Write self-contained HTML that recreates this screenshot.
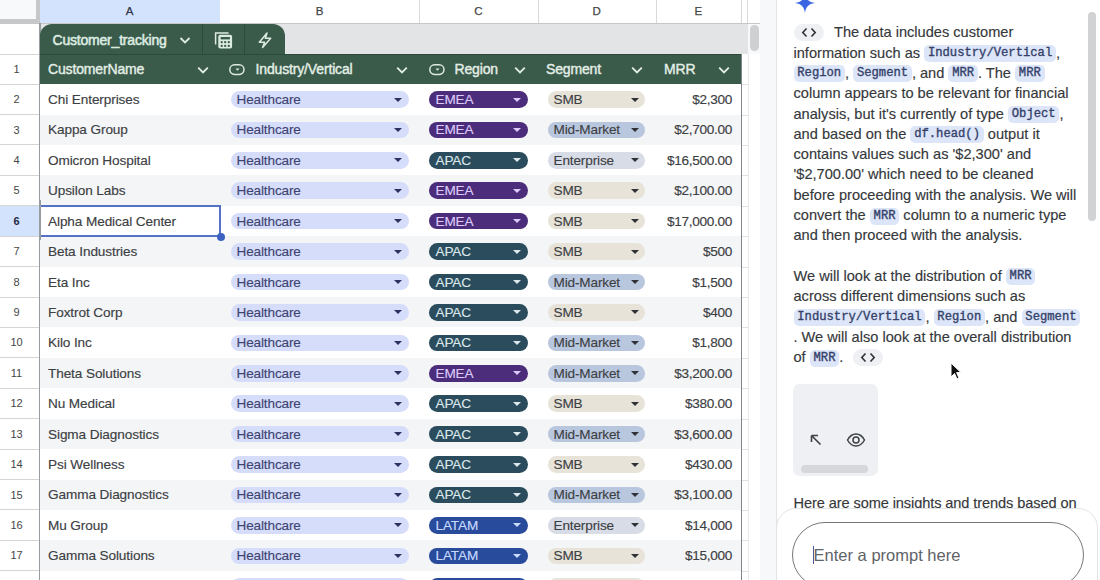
<!DOCTYPE html><html><head><meta charset="utf-8"><style>
*{margin:0;padding:0;box-sizing:border-box}
html,body{width:1100px;height:580px;overflow:hidden;background:#fff;font-family:"Liberation Sans",sans-serif;position:relative}
.a{position:absolute;white-space:nowrap}
.colhdr{left:0;top:0;width:760px;height:23.5px;background:#fff;border-bottom:1px solid #c7c7c7}
.corner{left:0;top:0;width:39.5px;height:23.3px;background:#f8f9fa;border-right:4px solid #c6c7c8;border-bottom:4.2px solid #c6c7c8}
.cl{top:0;height:23px;font-size:11.5px;color:#444746;text-align:center;line-height:23px;-webkit-text-stroke:0.25px #444746}
.vl{top:0;width:1px;height:23px;background:#d9d9d9}
.band{left:40px;top:23.5px;width:708px;height:30px;background:#e3e4e6}
.rowhdr{left:0;width:33px;font-size:11px;color:#444746;text-align:center}
.rl{left:0;width:39px;height:1px;background:#d5d5d5}
.tab{left:40px;top:24px;width:245px;height:30px;background:#3a5a4a;border-radius:12px 12px 0 0}
.hdr{left:40px;top:54px;width:701px;height:30.1px;background:#3a5a4a}
.ht{color:#e3efe6;font-size:14px;line-height:30px;-webkit-text-stroke:0.4px #e3efe6;letter-spacing:-0.15px}
.row{left:40px;width:701px}
.nm{left:48px;font-size:13.6px;color:#3c4043;letter-spacing:-0.1px;line-height:16px;-webkit-text-stroke:0.15px #3c4043}
.chip{border-radius:9px;height:16.6px}
.ct{font-size:13.6px;line-height:16.6px;letter-spacing:-0.15px;-webkit-text-stroke:0.12px currentColor}
.arr{width:0;height:0;border-left:4.5px solid transparent;border-right:4.5px solid transparent;border-top:4.8px solid #2b3160}
.mrr{left:600px;width:132px;font-size:13.6px;color:#3c4043;text-align:right;letter-spacing:-0.3px;line-height:16px;-webkit-text-stroke:0.15px #3c4043}
.pl{left:793.5px;font-size:14.6px;color:#35383b;-webkit-text-stroke:0.15px #35383b;line-height:20.3px;height:20.3px}
.cd{display:inline-block;font-family:"Liberation Mono",monospace;font-size:12.2px;color:#34416a;-webkit-text-stroke:0.35px #34416a;background:#dde5f8;border-radius:5px;padding:0 3.8px;line-height:17px;height:17px;vertical-align:1.5px}
</style></head><body>
<div class="a colhdr"></div>
<div class="a" style="left:39px;top:0;width:181px;height:23px;background:#d3e3fd"></div>
<div class="a corner"></div>
<div class="a vl" style="left:419px"></div>
<div class="a vl" style="left:537.6px"></div>
<div class="a vl" style="left:655.6px"></div>
<div class="a vl" style="left:741px"></div>
<div class="a vl" style="left:747px"></div>
<div class="a cl" style="left:39px;width:181px;color:#1f2a44">A</div>
<div class="a cl" style="left:220px;width:199px;">B</div>
<div class="a cl" style="left:419px;width:118.60000000000002px;">C</div>
<div class="a cl" style="left:537.6px;width:118.0px;">D</div>
<div class="a cl" style="left:655.6px;width:85.39999999999998px;">E</div>
<div class="a band"></div>
<div class="a" style="left:0;top:24px;width:39px;height:556px;background:#fff"></div>
<div class="a rl" style="top:53.5px"></div>
<div class="a rowhdr" style="top:54.00px;height:30.10px;line-height:30.10px;color:#444746">1</div>
<div class="a rl" style="top:83.60px"></div>
<div class="a rowhdr" style="top:84.10px;height:30.42px;line-height:30.42px;color:#444746">2</div>
<div class="a rl" style="top:114.02px"></div>
<div class="a rowhdr" style="top:114.52px;height:30.42px;line-height:30.42px;color:#444746">3</div>
<div class="a rl" style="top:144.44px"></div>
<div class="a rowhdr" style="top:144.94px;height:30.42px;line-height:30.42px;color:#444746">4</div>
<div class="a rl" style="top:174.86px"></div>
<div class="a rowhdr" style="top:175.36px;height:30.42px;line-height:30.42px;color:#444746">5</div>
<div class="a rl" style="top:205.28px"></div>
<div class="a" style="left:0;top:205.78px;width:39px;height:30.42px;background:#d3e3fd"></div>
<div class="a rowhdr" style="top:205.78px;height:30.42px;line-height:30.42px;color:#1f2a44;font-weight:bold">6</div>
<div class="a rl" style="top:235.70px"></div>
<div class="a rowhdr" style="top:236.20px;height:30.42px;line-height:30.42px;color:#444746">7</div>
<div class="a rl" style="top:266.12px"></div>
<div class="a rowhdr" style="top:266.62px;height:30.42px;line-height:30.42px;color:#444746">8</div>
<div class="a rl" style="top:296.54px"></div>
<div class="a rowhdr" style="top:297.04px;height:30.42px;line-height:30.42px;color:#444746">9</div>
<div class="a rl" style="top:326.96px"></div>
<div class="a rowhdr" style="top:327.46px;height:30.42px;line-height:30.42px;color:#444746">10</div>
<div class="a rl" style="top:357.38px"></div>
<div class="a rowhdr" style="top:357.88px;height:30.42px;line-height:30.42px;color:#444746">11</div>
<div class="a rl" style="top:387.80px"></div>
<div class="a rowhdr" style="top:388.30px;height:30.42px;line-height:30.42px;color:#444746">12</div>
<div class="a rl" style="top:418.22px"></div>
<div class="a rowhdr" style="top:418.72px;height:30.42px;line-height:30.42px;color:#444746">13</div>
<div class="a rl" style="top:448.64px"></div>
<div class="a rowhdr" style="top:449.14px;height:30.42px;line-height:30.42px;color:#444746">14</div>
<div class="a rl" style="top:479.06px"></div>
<div class="a rowhdr" style="top:479.56px;height:30.42px;line-height:30.42px;color:#444746">15</div>
<div class="a rl" style="top:509.48px"></div>
<div class="a rowhdr" style="top:509.98px;height:30.42px;line-height:30.42px;color:#444746">16</div>
<div class="a rl" style="top:539.90px"></div>
<div class="a rowhdr" style="top:540.40px;height:30.42px;line-height:30.42px;color:#444746">17</div>
<div class="a rl" style="top:570.32px"></div>
<div class="a rowhdr" style="top:570.82px;height:30.42px;line-height:30.42px;color:#444746">18</div>
<div class="a rl" style="top:600.74px"></div>
<div class="a" style="left:39px;top:23px;width:2px;height:557px;background:#979ca1"></div>
<div class="a tab"></div>
<div class="a" style="left:52.5px;top:24.5px;line-height:30px;font-size:14px;color:#dcebe0;-webkit-text-stroke:0.55px #dcebe0;letter-spacing:-0.2px">Customer_tracking</div>
<svg class="a" style="left:178px;top:33px" width="14" height="14" viewBox="0 0 14 14"><path d="M2.5 5 L7 9.5 L11.5 5" fill="none" stroke="#dcebe0" stroke-width="1.9"/></svg>
<div class="a" style="left:202px;top:24px;width:1px;height:30px;background:#2c4a3a"></div>
<div class="a" style="left:244px;top:24px;width:1px;height:30px;background:#2c4a3a"></div>
<svg class="a" style="left:0;top:0" width="300" height="60" viewBox="0 0 300 60"><path d="M215.6 44.5 V33 H228.6" fill="none" stroke="#dcebe0" stroke-width="1.5"/><rect x="218.3" y="34.8" width="13.8" height="13.6" rx="2" fill="#dcebe0"/><rect x="220.6" y="37" width="9.3" height="2.4" fill="#3a5a4a"/><g fill="#3a5a4a"><circle cx="221.7" cy="42.2" r="1.15"/><circle cx="225.2" cy="42.2" r="1.15"/><circle cx="228.8" cy="42.2" r="1.15"/><circle cx="221.7" cy="45.9" r="1.15"/><circle cx="225.2" cy="45.9" r="1.15"/><circle cx="228.8" cy="45.9" r="1.15"/></g></svg>
<svg class="a" style="left:0;top:0" width="300" height="60" viewBox="0 0 300 60"><path d="M267 33 L259.3 42.2 H264.6 L262.6 47.6 L270.7 38.3 H265.3 Z" fill="none" stroke="#dcebe0" stroke-width="1.5" stroke-linejoin="round"/></svg>
<div class="a hdr"></div>
<div class="a" style="left:40px;top:53.5px;width:701px;height:1px;background:#2c4a3a"></div>
<div class="a ht" style="left:48px;top:53.9px">CustomerName</div>
<div class="a ht" style="left:255.5px;top:53.9px">Industry/Vertical</div>
<div class="a ht" style="left:454.5px;top:53.9px">Region</div>
<div class="a ht" style="left:546px;top:53.9px">Segment</div>
<div class="a ht" style="left:664px;top:53.9px">MRR</div>
<svg class="a" style="left:196.3px;top:62.8px" width="14" height="14" viewBox="0 0 14 14"><path d="M2.2 4.6 L7 9.4 L11.8 4.6" fill="none" stroke="#e3efe6" stroke-width="1.8"/></svg>
<svg class="a" style="left:395px;top:62.8px" width="14" height="14" viewBox="0 0 14 14"><path d="M2.2 4.6 L7 9.4 L11.8 4.6" fill="none" stroke="#e3efe6" stroke-width="1.8"/></svg>
<svg class="a" style="left:513px;top:62.8px" width="14" height="14" viewBox="0 0 14 14"><path d="M2.2 4.6 L7 9.4 L11.8 4.6" fill="none" stroke="#e3efe6" stroke-width="1.8"/></svg>
<svg class="a" style="left:630px;top:62.8px" width="14" height="14" viewBox="0 0 14 14"><path d="M2.2 4.6 L7 9.4 L11.8 4.6" fill="none" stroke="#e3efe6" stroke-width="1.8"/></svg>
<svg class="a" style="left:717px;top:62.8px" width="14" height="14" viewBox="0 0 14 14"><path d="M2.2 4.6 L7 9.4 L11.8 4.6" fill="none" stroke="#e3efe6" stroke-width="1.8"/></svg>
<svg class="a" style="left:229.3px;top:63.5px" width="16" height="12" viewBox="0 0 16 12"><rect x="0.8" y="0.8" width="14.2" height="9.6" rx="4.8" fill="none" stroke="#dcebe0" stroke-width="1.5"/><path d="M6.5 4.6 H10.5 L8.5 6.8 Z" fill="#dcebe0"/></svg>
<svg class="a" style="left:428.5px;top:63.5px" width="16" height="12" viewBox="0 0 16 12"><rect x="0.8" y="0.8" width="14.2" height="9.6" rx="4.8" fill="none" stroke="#dcebe0" stroke-width="1.5"/><path d="M6.5 4.6 H10.5 L8.5 6.8 Z" fill="#dcebe0"/></svg>
<div class="a row" style="top:84.10px;height:30.42px;background:#fff"></div>
<div class="a nm" style="top:92.01px">Chi Enterprises</div>
<div class="a chip" style="left:231px;top:91.21px;width:178px;background:#d6ddfa"></div>
<div class="a ct" style="left:236.5px;top:92.01px;color:#3d4472">Healthcare</div>
<div class="a arr" style="left:393.8px;top:97.51px"></div>
<div class="a chip" style="left:429px;top:91.21px;width:99px;background:#4c2d7b"></div>
<div class="a ct" style="left:435.5px;top:92.01px;color:#dccbfa">EMEA</div>
<div class="a arr" style="left:512.5px;top:97.51px;border-top-color:#dccbfa"></div>
<div class="a chip" style="left:547.5px;top:91.21px;width:97.5px;background:#e7e3d9"></div>
<div class="a ct" style="left:553.5px;top:92.01px;color:#3c4043">SMB</div>
<div class="a arr" style="left:630.7px;top:97.51px;border-top-color:#2f3337"></div>
<div class="a mrr" style="top:92.01px">$2,300</div>
<div class="a" style="left:741px;top:84.10px;width:7px;height:1px;background:#e0e0e0"></div>
<div class="a row" style="top:114.52px;height:30.42px;background:#f4f5f7"></div>
<div class="a nm" style="top:122.43px">Kappa Group</div>
<div class="a chip" style="left:231px;top:121.63px;width:178px;background:#d6ddfa"></div>
<div class="a ct" style="left:236.5px;top:122.43px;color:#3d4472">Healthcare</div>
<div class="a arr" style="left:393.8px;top:127.93px"></div>
<div class="a chip" style="left:429px;top:121.63px;width:99px;background:#4c2d7b"></div>
<div class="a ct" style="left:435.5px;top:122.43px;color:#dccbfa">EMEA</div>
<div class="a arr" style="left:512.5px;top:127.93px;border-top-color:#dccbfa"></div>
<div class="a chip" style="left:547.5px;top:121.63px;width:97.5px;background:#b9c7de"></div>
<div class="a ct" style="left:553.5px;top:122.43px;color:#3c4043">Mid-Market</div>
<div class="a arr" style="left:630.7px;top:127.93px;border-top-color:#2f3337"></div>
<div class="a mrr" style="top:122.43px">$2,700.00</div>
<div class="a" style="left:741px;top:114.52px;width:7px;height:1px;background:#e0e0e0"></div>
<div class="a row" style="top:144.94px;height:30.42px;background:#fff"></div>
<div class="a nm" style="top:152.85px">Omicron Hospital</div>
<div class="a chip" style="left:231px;top:152.05px;width:178px;background:#d6ddfa"></div>
<div class="a ct" style="left:236.5px;top:152.85px;color:#3d4472">Healthcare</div>
<div class="a arr" style="left:393.8px;top:158.35px"></div>
<div class="a chip" style="left:429px;top:152.05px;width:99px;background:#2b4c5c"></div>
<div class="a ct" style="left:435.5px;top:152.85px;color:#dce8ec">APAC</div>
<div class="a arr" style="left:512.5px;top:158.35px;border-top-color:#dce8ec"></div>
<div class="a chip" style="left:547.5px;top:152.05px;width:97.5px;background:#d8dce6"></div>
<div class="a ct" style="left:553.5px;top:152.85px;color:#3c4043">Enterprise</div>
<div class="a arr" style="left:630.7px;top:158.35px;border-top-color:#2f3337"></div>
<div class="a mrr" style="top:152.85px">$16,500.00</div>
<div class="a" style="left:741px;top:144.94px;width:7px;height:1px;background:#e0e0e0"></div>
<div class="a row" style="top:175.36px;height:30.42px;background:#f4f5f7"></div>
<div class="a nm" style="top:183.27px">Upsilon Labs</div>
<div class="a chip" style="left:231px;top:182.47px;width:178px;background:#d6ddfa"></div>
<div class="a ct" style="left:236.5px;top:183.27px;color:#3d4472">Healthcare</div>
<div class="a arr" style="left:393.8px;top:188.77px"></div>
<div class="a chip" style="left:429px;top:182.47px;width:99px;background:#4c2d7b"></div>
<div class="a ct" style="left:435.5px;top:183.27px;color:#dccbfa">EMEA</div>
<div class="a arr" style="left:512.5px;top:188.77px;border-top-color:#dccbfa"></div>
<div class="a chip" style="left:547.5px;top:182.47px;width:97.5px;background:#e7e3d9"></div>
<div class="a ct" style="left:553.5px;top:183.27px;color:#3c4043">SMB</div>
<div class="a arr" style="left:630.7px;top:188.77px;border-top-color:#2f3337"></div>
<div class="a mrr" style="top:183.27px">$2,100.00</div>
<div class="a" style="left:741px;top:175.36px;width:7px;height:1px;background:#e0e0e0"></div>
<div class="a row" style="top:205.78px;height:30.42px;background:#fff"></div>
<div class="a nm" style="top:213.69px">Alpha Medical Center</div>
<div class="a chip" style="left:231px;top:212.89px;width:178px;background:#d6ddfa"></div>
<div class="a ct" style="left:236.5px;top:213.69px;color:#3d4472">Healthcare</div>
<div class="a arr" style="left:393.8px;top:219.19px"></div>
<div class="a chip" style="left:429px;top:212.89px;width:99px;background:#4c2d7b"></div>
<div class="a ct" style="left:435.5px;top:213.69px;color:#dccbfa">EMEA</div>
<div class="a arr" style="left:512.5px;top:219.19px;border-top-color:#dccbfa"></div>
<div class="a chip" style="left:547.5px;top:212.89px;width:97.5px;background:#e7e3d9"></div>
<div class="a ct" style="left:553.5px;top:213.69px;color:#3c4043">SMB</div>
<div class="a arr" style="left:630.7px;top:219.19px;border-top-color:#2f3337"></div>
<div class="a mrr" style="top:213.69px">$17,000.00</div>
<div class="a" style="left:741px;top:205.78px;width:7px;height:1px;background:#e0e0e0"></div>
<div class="a row" style="top:236.20px;height:30.42px;background:#f4f5f7"></div>
<div class="a nm" style="top:244.11px">Beta Industries</div>
<div class="a chip" style="left:231px;top:243.31px;width:178px;background:#d6ddfa"></div>
<div class="a ct" style="left:236.5px;top:244.11px;color:#3d4472">Healthcare</div>
<div class="a arr" style="left:393.8px;top:249.61px"></div>
<div class="a chip" style="left:429px;top:243.31px;width:99px;background:#2b4c5c"></div>
<div class="a ct" style="left:435.5px;top:244.11px;color:#dce8ec">APAC</div>
<div class="a arr" style="left:512.5px;top:249.61px;border-top-color:#dce8ec"></div>
<div class="a chip" style="left:547.5px;top:243.31px;width:97.5px;background:#e7e3d9"></div>
<div class="a ct" style="left:553.5px;top:244.11px;color:#3c4043">SMB</div>
<div class="a arr" style="left:630.7px;top:249.61px;border-top-color:#2f3337"></div>
<div class="a mrr" style="top:244.11px">$500</div>
<div class="a" style="left:741px;top:236.20px;width:7px;height:1px;background:#e0e0e0"></div>
<div class="a row" style="top:266.62px;height:30.42px;background:#fff"></div>
<div class="a nm" style="top:274.53px">Eta Inc</div>
<div class="a chip" style="left:231px;top:273.73px;width:178px;background:#d6ddfa"></div>
<div class="a ct" style="left:236.5px;top:274.53px;color:#3d4472">Healthcare</div>
<div class="a arr" style="left:393.8px;top:280.03px"></div>
<div class="a chip" style="left:429px;top:273.73px;width:99px;background:#2b4c5c"></div>
<div class="a ct" style="left:435.5px;top:274.53px;color:#dce8ec">APAC</div>
<div class="a arr" style="left:512.5px;top:280.03px;border-top-color:#dce8ec"></div>
<div class="a chip" style="left:547.5px;top:273.73px;width:97.5px;background:#b9c7de"></div>
<div class="a ct" style="left:553.5px;top:274.53px;color:#3c4043">Mid-Market</div>
<div class="a arr" style="left:630.7px;top:280.03px;border-top-color:#2f3337"></div>
<div class="a mrr" style="top:274.53px">$1,500</div>
<div class="a" style="left:741px;top:266.62px;width:7px;height:1px;background:#e0e0e0"></div>
<div class="a row" style="top:297.04px;height:30.42px;background:#f4f5f7"></div>
<div class="a nm" style="top:304.95px">Foxtrot Corp</div>
<div class="a chip" style="left:231px;top:304.15px;width:178px;background:#d6ddfa"></div>
<div class="a ct" style="left:236.5px;top:304.95px;color:#3d4472">Healthcare</div>
<div class="a arr" style="left:393.8px;top:310.45px"></div>
<div class="a chip" style="left:429px;top:304.15px;width:99px;background:#2b4c5c"></div>
<div class="a ct" style="left:435.5px;top:304.95px;color:#dce8ec">APAC</div>
<div class="a arr" style="left:512.5px;top:310.45px;border-top-color:#dce8ec"></div>
<div class="a chip" style="left:547.5px;top:304.15px;width:97.5px;background:#e7e3d9"></div>
<div class="a ct" style="left:553.5px;top:304.95px;color:#3c4043">SMB</div>
<div class="a arr" style="left:630.7px;top:310.45px;border-top-color:#2f3337"></div>
<div class="a mrr" style="top:304.95px">$400</div>
<div class="a" style="left:741px;top:297.04px;width:7px;height:1px;background:#e0e0e0"></div>
<div class="a row" style="top:327.46px;height:30.42px;background:#fff"></div>
<div class="a nm" style="top:335.37px">Kilo Inc</div>
<div class="a chip" style="left:231px;top:334.57px;width:178px;background:#d6ddfa"></div>
<div class="a ct" style="left:236.5px;top:335.37px;color:#3d4472">Healthcare</div>
<div class="a arr" style="left:393.8px;top:340.87px"></div>
<div class="a chip" style="left:429px;top:334.57px;width:99px;background:#2b4c5c"></div>
<div class="a ct" style="left:435.5px;top:335.37px;color:#dce8ec">APAC</div>
<div class="a arr" style="left:512.5px;top:340.87px;border-top-color:#dce8ec"></div>
<div class="a chip" style="left:547.5px;top:334.57px;width:97.5px;background:#b9c7de"></div>
<div class="a ct" style="left:553.5px;top:335.37px;color:#3c4043">Mid-Market</div>
<div class="a arr" style="left:630.7px;top:340.87px;border-top-color:#2f3337"></div>
<div class="a mrr" style="top:335.37px">$1,800</div>
<div class="a" style="left:741px;top:327.46px;width:7px;height:1px;background:#e0e0e0"></div>
<div class="a row" style="top:357.88px;height:30.42px;background:#f4f5f7"></div>
<div class="a nm" style="top:365.79px">Theta Solutions</div>
<div class="a chip" style="left:231px;top:364.99px;width:178px;background:#d6ddfa"></div>
<div class="a ct" style="left:236.5px;top:365.79px;color:#3d4472">Healthcare</div>
<div class="a arr" style="left:393.8px;top:371.29px"></div>
<div class="a chip" style="left:429px;top:364.99px;width:99px;background:#4c2d7b"></div>
<div class="a ct" style="left:435.5px;top:365.79px;color:#dccbfa">EMEA</div>
<div class="a arr" style="left:512.5px;top:371.29px;border-top-color:#dccbfa"></div>
<div class="a chip" style="left:547.5px;top:364.99px;width:97.5px;background:#b9c7de"></div>
<div class="a ct" style="left:553.5px;top:365.79px;color:#3c4043">Mid-Market</div>
<div class="a arr" style="left:630.7px;top:371.29px;border-top-color:#2f3337"></div>
<div class="a mrr" style="top:365.79px">$3,200.00</div>
<div class="a" style="left:741px;top:357.88px;width:7px;height:1px;background:#e0e0e0"></div>
<div class="a row" style="top:388.30px;height:30.42px;background:#fff"></div>
<div class="a nm" style="top:396.21px">Nu Medical</div>
<div class="a chip" style="left:231px;top:395.41px;width:178px;background:#d6ddfa"></div>
<div class="a ct" style="left:236.5px;top:396.21px;color:#3d4472">Healthcare</div>
<div class="a arr" style="left:393.8px;top:401.71px"></div>
<div class="a chip" style="left:429px;top:395.41px;width:99px;background:#2b4c5c"></div>
<div class="a ct" style="left:435.5px;top:396.21px;color:#dce8ec">APAC</div>
<div class="a arr" style="left:512.5px;top:401.71px;border-top-color:#dce8ec"></div>
<div class="a chip" style="left:547.5px;top:395.41px;width:97.5px;background:#e7e3d9"></div>
<div class="a ct" style="left:553.5px;top:396.21px;color:#3c4043">SMB</div>
<div class="a arr" style="left:630.7px;top:401.71px;border-top-color:#2f3337"></div>
<div class="a mrr" style="top:396.21px">$380.00</div>
<div class="a" style="left:741px;top:388.30px;width:7px;height:1px;background:#e0e0e0"></div>
<div class="a row" style="top:418.72px;height:30.42px;background:#f4f5f7"></div>
<div class="a nm" style="top:426.63px">Sigma Diagnostics</div>
<div class="a chip" style="left:231px;top:425.83px;width:178px;background:#d6ddfa"></div>
<div class="a ct" style="left:236.5px;top:426.63px;color:#3d4472">Healthcare</div>
<div class="a arr" style="left:393.8px;top:432.13px"></div>
<div class="a chip" style="left:429px;top:425.83px;width:99px;background:#2b4c5c"></div>
<div class="a ct" style="left:435.5px;top:426.63px;color:#dce8ec">APAC</div>
<div class="a arr" style="left:512.5px;top:432.13px;border-top-color:#dce8ec"></div>
<div class="a chip" style="left:547.5px;top:425.83px;width:97.5px;background:#b9c7de"></div>
<div class="a ct" style="left:553.5px;top:426.63px;color:#3c4043">Mid-Market</div>
<div class="a arr" style="left:630.7px;top:432.13px;border-top-color:#2f3337"></div>
<div class="a mrr" style="top:426.63px">$3,600.00</div>
<div class="a" style="left:741px;top:418.72px;width:7px;height:1px;background:#e0e0e0"></div>
<div class="a row" style="top:449.14px;height:30.42px;background:#fff"></div>
<div class="a nm" style="top:457.05px">Psi Wellness</div>
<div class="a chip" style="left:231px;top:456.25px;width:178px;background:#d6ddfa"></div>
<div class="a ct" style="left:236.5px;top:457.05px;color:#3d4472">Healthcare</div>
<div class="a arr" style="left:393.8px;top:462.55px"></div>
<div class="a chip" style="left:429px;top:456.25px;width:99px;background:#2b4c5c"></div>
<div class="a ct" style="left:435.5px;top:457.05px;color:#dce8ec">APAC</div>
<div class="a arr" style="left:512.5px;top:462.55px;border-top-color:#dce8ec"></div>
<div class="a chip" style="left:547.5px;top:456.25px;width:97.5px;background:#e7e3d9"></div>
<div class="a ct" style="left:553.5px;top:457.05px;color:#3c4043">SMB</div>
<div class="a arr" style="left:630.7px;top:462.55px;border-top-color:#2f3337"></div>
<div class="a mrr" style="top:457.05px">$430.00</div>
<div class="a" style="left:741px;top:449.14px;width:7px;height:1px;background:#e0e0e0"></div>
<div class="a row" style="top:479.56px;height:30.42px;background:#f4f5f7"></div>
<div class="a nm" style="top:487.47px">Gamma Diagnostics</div>
<div class="a chip" style="left:231px;top:486.67px;width:178px;background:#d6ddfa"></div>
<div class="a ct" style="left:236.5px;top:487.47px;color:#3d4472">Healthcare</div>
<div class="a arr" style="left:393.8px;top:492.97px"></div>
<div class="a chip" style="left:429px;top:486.67px;width:99px;background:#2b4c5c"></div>
<div class="a ct" style="left:435.5px;top:487.47px;color:#dce8ec">APAC</div>
<div class="a arr" style="left:512.5px;top:492.97px;border-top-color:#dce8ec"></div>
<div class="a chip" style="left:547.5px;top:486.67px;width:97.5px;background:#b9c7de"></div>
<div class="a ct" style="left:553.5px;top:487.47px;color:#3c4043">Mid-Market</div>
<div class="a arr" style="left:630.7px;top:492.97px;border-top-color:#2f3337"></div>
<div class="a mrr" style="top:487.47px">$3,100.00</div>
<div class="a" style="left:741px;top:479.56px;width:7px;height:1px;background:#e0e0e0"></div>
<div class="a row" style="top:509.98px;height:30.42px;background:#fff"></div>
<div class="a nm" style="top:517.89px">Mu Group</div>
<div class="a chip" style="left:231px;top:517.09px;width:178px;background:#d6ddfa"></div>
<div class="a ct" style="left:236.5px;top:517.89px;color:#3d4472">Healthcare</div>
<div class="a arr" style="left:393.8px;top:523.39px"></div>
<div class="a chip" style="left:429px;top:517.09px;width:99px;background:#284b9b"></div>
<div class="a ct" style="left:435.5px;top:517.89px;color:#c9dbff">LATAM</div>
<div class="a arr" style="left:512.5px;top:523.39px;border-top-color:#c9dbff"></div>
<div class="a chip" style="left:547.5px;top:517.09px;width:97.5px;background:#d8dce6"></div>
<div class="a ct" style="left:553.5px;top:517.89px;color:#3c4043">Enterprise</div>
<div class="a arr" style="left:630.7px;top:523.39px;border-top-color:#2f3337"></div>
<div class="a mrr" style="top:517.89px">$14,000</div>
<div class="a" style="left:741px;top:509.98px;width:7px;height:1px;background:#e0e0e0"></div>
<div class="a row" style="top:540.40px;height:30.42px;background:#f4f5f7"></div>
<div class="a nm" style="top:548.31px">Gamma Solutions</div>
<div class="a chip" style="left:231px;top:547.51px;width:178px;background:#d6ddfa"></div>
<div class="a ct" style="left:236.5px;top:548.31px;color:#3d4472">Healthcare</div>
<div class="a arr" style="left:393.8px;top:553.81px"></div>
<div class="a chip" style="left:429px;top:547.51px;width:99px;background:#284b9b"></div>
<div class="a ct" style="left:435.5px;top:548.31px;color:#c9dbff">LATAM</div>
<div class="a arr" style="left:512.5px;top:553.81px;border-top-color:#c9dbff"></div>
<div class="a chip" style="left:547.5px;top:547.51px;width:97.5px;background:#e7e3d9"></div>
<div class="a ct" style="left:553.5px;top:548.31px;color:#3c4043">SMB</div>
<div class="a arr" style="left:630.7px;top:553.81px;border-top-color:#2f3337"></div>
<div class="a mrr" style="top:548.31px">$15,000</div>
<div class="a" style="left:741px;top:540.40px;width:7px;height:1px;background:#e0e0e0"></div>
<div class="a row" style="top:570.82px;height:30.42px;background:#fff"></div>
<div class="a chip" style="left:231px;top:577.93px;width:178px;background:#d6ddfa"></div>
<div class="a ct" style="left:236.5px;top:578.73px;color:#3d4472">Healthcare</div>
<div class="a arr" style="left:393.8px;top:584.23px"></div>
<div class="a chip" style="left:429px;top:577.93px;width:99px;background:#284b9b"></div>
<div class="a ct" style="left:435.5px;top:578.73px;color:#c9dbff">LATAM</div>
<div class="a arr" style="left:512.5px;top:584.23px;border-top-color:#c9dbff"></div>
<div class="a chip" style="left:547.5px;top:577.93px;width:97.5px;background:#e7e3d9"></div>
<div class="a ct" style="left:553.5px;top:578.73px;color:#3c4043">SMB</div>
<div class="a arr" style="left:630.7px;top:584.23px;border-top-color:#2f3337"></div>
<div class="a mrr" style="top:578.73px">$12,000</div>
<div class="a" style="left:741px;top:570.82px;width:7px;height:1px;background:#e0e0e0"></div>
<div class="a" style="left:39px;top:205.28px;width:182px;height:31.42px;border:2px solid #5572c4"></div>
<div class="a" style="left:216.5px;top:233.00px;width:8px;height:8px;border-radius:50%;background:#3b62c2"></div>
<div class="a" style="left:747.5px;top:54px;width:1px;height:526px;background:#e8e9ea"></div>
<div class="a" style="left:39px;top:200px;width:2px;height:40px;background:#979ca1"></div>
<div class="a" style="left:740.5px;top:54px;width:1.5px;height:526px;background:#80868b"></div>
<div class="a" style="left:760px;top:0;width:16px;height:580px;background:#f7f8f9"></div>
<div class="a" style="left:748px;top:23.5px;width:12px;height:30px;background:#f8f9fa"></div>
<div class="a" style="left:750px;top:25px;width:8.5px;height:26px;border-radius:5px;background:#cfd0d2"></div>
<div class="a" style="left:776px;top:0;width:1px;height:580px;background:#e4e5e7"></div>
<div class="a" style="left:777px;top:0;width:323px;height:580px;background:#fff"></div>
<svg class="a" style="left:795.3px;top:-7.5px" width="20" height="20" viewBox="0 0 18 18"><path d="M9 0 C9.6 5 12 8.4 18 9 C12 9.6 9.6 13 9 18 C8.4 13 6 9.6 0 9 C6 8.4 8.4 5 9 0 Z" fill="#3b66e3"/></svg>
<div class="a" style="left:1088px;top:12.4px;width:8px;height:209px;border-radius:4px;background:#d1d2d4"></div>
<div class="a pl" style="top:22.35px"><span style="display:inline-block;width:40.5px"></span>The data includes customer</div>
<div class="a pl" style="top:42.65px">information such as <span class="cd">Industry/Vertical</span>,</div>
<div class="a pl" style="top:62.95px"><span class="cd">Region</span>, <span class="cd">Segment</span>, and <span class="cd">MRR</span>. The <span class="cd">MRR</span></div>
<div class="a pl" style="top:83.25px">column appears to be relevant for financial</div>
<div class="a pl" style="top:103.55px">analysis, but it's currently of type <span class="cd">Object</span>,</div>
<div class="a pl" style="top:123.85px">and based on the <span class="cd">df.head()</span> output it</div>
<div class="a pl" style="top:144.15px">contains values such as '$2,300' and</div>
<div class="a pl" style="top:164.45px">'$2,700.00' which need to be cleaned</div>
<div class="a pl" style="top:184.75px">before proceeding with the analysis. We will</div>
<div class="a pl" style="top:205.05px">convert the <span class="cd">MRR</span> column to a numeric type</div>
<div class="a pl" style="top:225.35px">and then proceed with the analysis.</div>
<div class="a pl" style="top:265.95px">We will look at the distribution of <span class="cd">MRR</span></div>
<div class="a pl" style="top:286.25px">across different dimensions such as</div>
<div class="a pl" style="top:306.55px"><span class="cd">Industry/Vertical</span>, <span class="cd">Region</span>, and <span class="cd">Segment</span></div>
<div class="a pl" style="top:326.85px">. We will also look at the overall distribution</div>
<div class="a pl" style="top:347.15px">of <span class="cd">MRR</span>.</div>
<div class="a" style="left:794px;top:24px;width:30px;height:17px;border-radius:8.5px;background:#eef0f3"></div><svg class="a" style="left:801px;top:27px" width="16" height="11" viewBox="0 0 16 11"><path d="M5.5 1.5 L1.8 5.5 L5.5 9.5 M10.5 1.5 L14.2 5.5 L10.5 9.5" fill="none" stroke="#2f3337" stroke-width="1.6"/></svg>
<div class="a" style="left:853px;top:349px;width:30px;height:17px;border-radius:8.5px;background:#eef0f3"></div><svg class="a" style="left:860px;top:352px" width="16" height="11" viewBox="0 0 16 11"><path d="M5.5 1.5 L1.8 5.5 L5.5 9.5 M10.5 1.5 L14.2 5.5 L10.5 9.5" fill="none" stroke="#2f3337" stroke-width="1.6"/></svg>
<svg class="a" style="left:949.5px;top:362px" width="14" height="20" viewBox="0 0 14 20"><path d="M1 1 L1 15 L4.5 11.5 L7 17 L9 16 L6.6 10.6 L11 10.6 Z" fill="#111" stroke="#fff" stroke-width="1"/></svg>
<div class="a" style="left:793px;top:384.3px;width:85px;height:92px;border-radius:7px;background:#eef0f3"></div>
<svg class="a" style="left:809px;top:433px" width="14" height="14" viewBox="0 0 14 14"><path d="M2.5 2.5 L11.5 11.5 M2.5 2.5 H9 M2.5 2.5 V9" fill="none" stroke="#3c4043" stroke-width="1.6"/></svg>
<svg class="a" style="left:846px;top:432px" width="20" height="16" viewBox="0 0 20 16"><path d="M1.5 8 C4 3.5 7 2 10 2 C13 2 16 3.5 18.5 8 C16 12.5 13 14 10 14 C7 14 4 12.5 1.5 8 Z" fill="none" stroke="#3c4043" stroke-width="1.5"/><circle cx="10" cy="8" r="3" fill="none" stroke="#3c4043" stroke-width="1.5"/></svg>
<div class="a" style="left:801px;top:464.8px;width:67.3px;height:8.2px;border-radius:4px;background:#d5d7da"></div>
<div class="a pl" style="top:493px;letter-spacing:-0.1px">Here are some insights and trends based on</div>
<div class="a" style="left:776px;top:507.5px;width:322px;height:100px;border-radius:20px 20px 0 0;background:#fff;border:1px solid #e3e4e6"></div>
<div class="a" style="left:792px;top:522px;width:292.3px;height:66px;border-radius:33px;background:#fff;border:1.4px solid #74777a"></div>
<div class="a" style="left:813.6px;top:544.5px;font-size:16.5px;line-height:20px;color:#5f6368">Enter a prompt here</div>
<div class="a" style="left:813px;top:545.5px;width:1.3px;height:18px;background:#4a5a9a"></div>
</body></html>
